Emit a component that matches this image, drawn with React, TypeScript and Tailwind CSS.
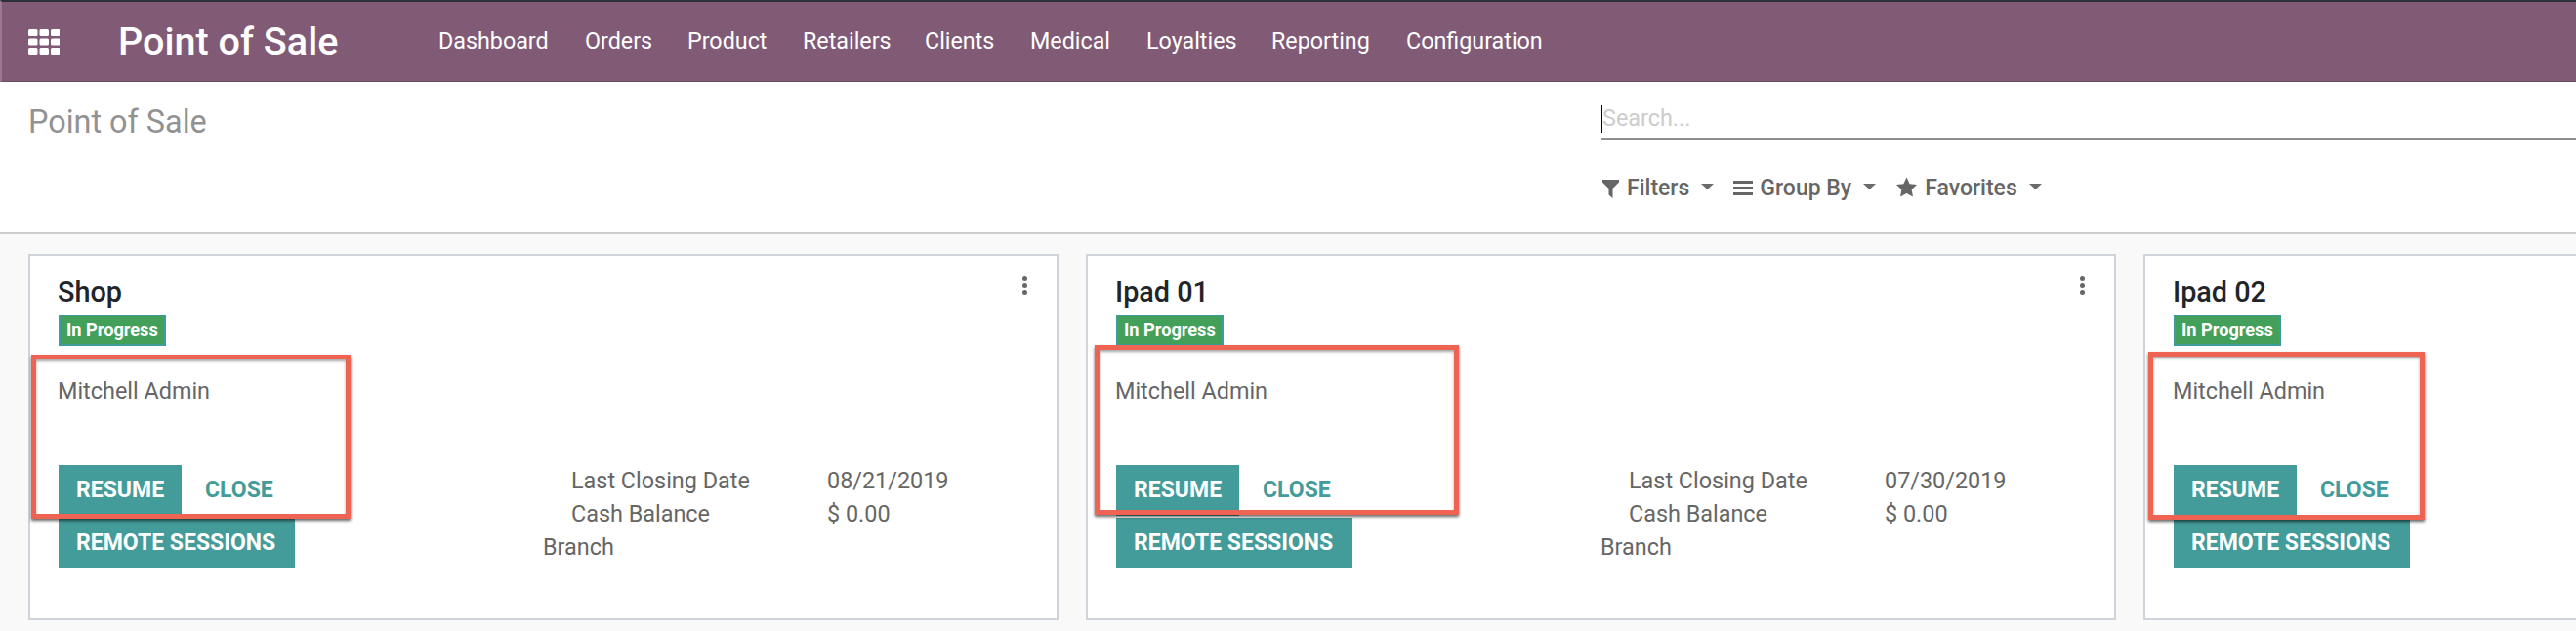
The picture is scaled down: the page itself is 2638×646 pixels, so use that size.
const font = { fontFamily: "Roboto, sans-serif" };

function Caret() {
  return <svg width="13" height="6" viewBox="0 0 13 6" className="ml-[12px] -translate-y-[2px]"><path d="M0 0h13L6.500 6z" fill="#6b6b6b" /></svg>;
}

function Card({ title, width, boxClass, children }: { title: string; width: string; boxClass: string; children?: React.ReactNode }) {
  return (
    <div className={`relative h-[375px] shrink-0 border-2 border-[#ced4da] bg-white pl-[29px] pr-[20px] ${width}`}>
      <div className="flex h-[57px] items-end justify-between">
        <div className="-ml-px text-[28.8px] font-medium leading-[39px] text-[#212529]">{title}</div>
      </div>
      <div className="mt-[3px] flex h-[32px] w-fit items-center border-2 border-[#3f9c9c] bg-[#43a05a] px-[6px] text-[18.2px] font-bold leading-none text-white">In Progress</div>
      <div className="-ml-px mt-[30px] text-[23.4px] leading-[32px] text-[#666666]">Mitchell Admin</div>
      <div className="mt-[60px] flex">
        <div className="flex h-[52px] w-[126px] items-center bg-[#439c9a] pl-[18px] text-[23px] font-bold text-white">RESUME</div>
        <div className="ml-[24px] flex h-[52px] items-center text-[23px] font-bold text-[#439c9a]">CLOSE</div>
      </div>
      <div className="mt-[2px] flex h-[52px] w-[242px] items-center bg-[#439c9a] pl-[18px] text-[23px] font-bold text-white">REMOTE SESSIONS</div>
      <div className={`absolute border-[5px] border-[#ee6352] shadow-[0_2px_3px_rgba(0,0,0,0.6),inset_0_2px_3px_rgba(0,0,0,0.35)] ${boxClass}`} />
      {children}
    </div>
  );
}

function Dots() {
  return (
    <div className="absolute right-[30px] top-[21px] flex flex-col gap-[2px]">
      <span className="h-[5px] w-[5px] rounded-full bg-[#666]" />
      <span className="h-[5px] w-[5px] rounded-full bg-[#666]" />
      <span className="h-[5px] w-[5px] rounded-full bg-[#666]" />
    </div>
  );
}

function Stats({ date }: { date: string }) {
  return (
    <div className="absolute left-[525px] top-[213px] text-[23.4px] leading-[34px] text-[#666666]">
      <div className="flex pl-[29px]"><span className="w-[262px]">Last Closing Date</span><span>{date}</span></div>
      <div className="flex pl-[29px]"><span className="w-[262px]">Cash Balance</span><span>$ 0.00</span></div>
      <div>Branch</div>
    </div>
  );
}

export default function App() {
  const menu = [
    ["Dashboard", "w-[150px]"],
    ["Orders", "w-[105px]"],
    ["Product", "w-[118px]"],
    ["Retailers", "w-[125px]"],
    ["Clients", "w-[108px]"],
    ["Medical", "w-[119px]"],
    ["Loyalties", "w-[128px]"],
    ["Reporting", "w-[138px]"],
    ["Configuration", "w-[150px]"],
  ];
  return (
    <div style={font} className="h-[646px] w-[2638px] overflow-hidden bg-[#f9f9f9]">
      <header className="flex h-[84px] items-center border-b border-l-2 border-b-[#6b4a64] border-l-[#9a7a92] border-t-2 border-t-[#2f2f38] bg-[#815b76] pl-[27px] text-white">
        <svg width="32" height="26" viewBox="0 0 32 26" fill="white">
          {[0, 11.500, 23].map((x) => [0, 9.500, 19].map((y) => <rect key={`${x}-${y}`} x={x} y={y} width="9.500" height="7" rx="1.500" />))}
        </svg>
        <div className="ml-[60px] w-[328px] text-[39.6px] font-medium leading-none">Point of Sale</div>
        <nav className="flex text-[23.3px]">
          {menu.map(([m, w]) => <div key={m} className={w}>{m}</div>)}
        </nav>
      </header>
      <section className="flex h-[156px] border-b-2 border-b-[#cccccc] bg-white pl-[29px]">
        <div className="mt-[22px] w-[1611px] text-[32.4px] leading-[38px] text-[#929292]">Point of Sale</div>
        <div className="flex-1">
          <div className="mt-[24px] flex h-[35px] items-center border-b-2 border-b-[#8f8f8f] text-[23.4px]">
            <span className="h-[28px] w-px -translate-y-[3px] bg-black" />
            <span className="-translate-y-[3px] text-[#cccccc]">Search...</span>
          </div>
          <div className="mt-[36px] flex h-[28px] items-center text-[23px] font-medium text-[#666666]">
            <svg className="ml-[1px]" width="17" height="19" viewBox="0 0 17 19" fill="#666"><path d="M0 0h17v2.500L10.500 9v10L6.500 15.500V9L0 2.500z" /></svg>
            <span className="ml-[8px]">Filters</span><Caret />
            <svg className="ml-[20px] -translate-y-[1px]" width="20" height="15" viewBox="0 0 20 15" fill="#666"><path d="M0 0h20v3H0zM0 6h20v3H0zM0 12h20v3H0z" /></svg>
            <span className="ml-[7px]">Group By</span><Caret />
            <svg className="ml-[21px] -translate-y-[2px]" width="21" height="21" viewBox="0 0 22 21" fill="#666"><path d="M11 0l3.300 7 7.700 1-5.600 5.300 1.400 7.700L11 17.300 4.200 21l1.400-7.700L0 8l7.700-1z" /></svg>
            <span className="ml-[8px]">Favorites</span><Caret />
          </div>
        </div>
      </section>
      <main className="flex gap-[28px] pl-[29px] pt-[20px]">
        <Card title="Shop" width="w-[1055px]" boxClass="left-[1px] top-[101px] h-[168px] w-[327px]"><Dots /><Stats date="08/21/2019" /></Card>
        <Card title="Ipad 01" width="w-[1055px]" boxClass="left-[7px] top-[91px] h-[174px] w-[373px]"><Dots /><Stats date="07/30/2019" /></Card>
        <Card title="Ipad 02" width="w-[1054px]" boxClass="left-[3px] top-[98px] h-[172px] w-[283px]" />
      </main>
    </div>
  );
}
